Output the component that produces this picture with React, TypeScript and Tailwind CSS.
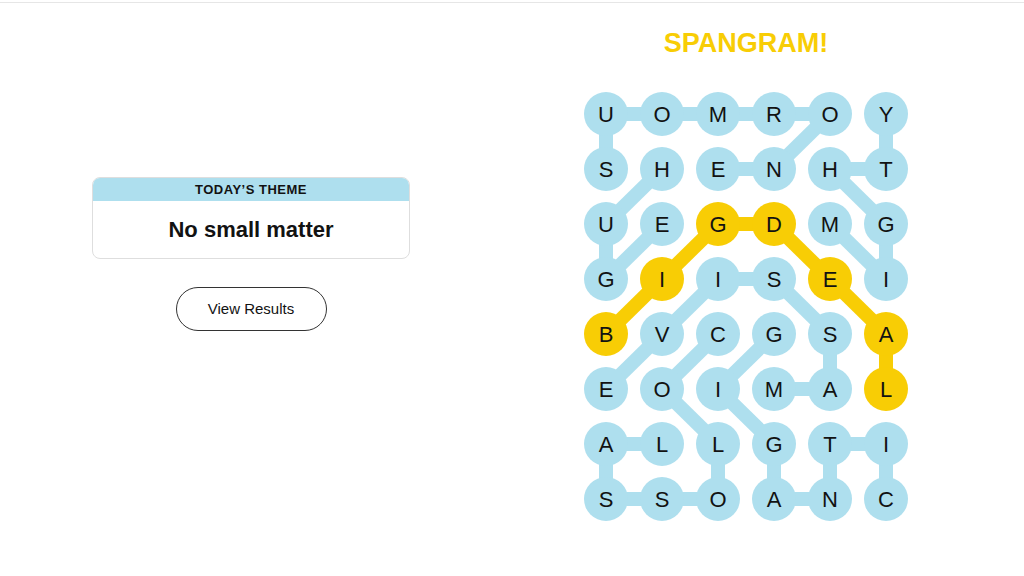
import React from 'react';

const ROWS = ['UOMROY', 'SHENHT', 'UEGDMG', 'GIISEI', 'BVCGSA', 'EOIMAL', 'ALLGTI', 'SSOANC'];

// words as paths of [row, col]
const WORDS: { cells: [number, number][]; spangram?: boolean }[] = [
  { cells: [[1, 2], [1, 3], [0, 4], [0, 3], [0, 2], [0, 1], [0, 0], [1, 0]] },
  { cells: [[1, 1], [2, 0], [3, 0], [2, 1]] },
  { cells: [[2, 4], [3, 5], [2, 5], [1, 4], [1, 5], [0, 5]] },
  { cells: [[5, 3], [5, 4], [4, 4], [3, 3], [3, 2], [4, 1], [5, 0]] },
  { cells: [[4, 2], [5, 1], [6, 2], [7, 2], [7, 1], [7, 0], [6, 0], [6, 1]] },
  { cells: [[4, 3], [5, 2], [6, 3], [7, 3], [7, 4], [6, 4], [6, 5], [7, 5]] },
  { cells: [[4, 0], [3, 1], [2, 2], [2, 3], [3, 4], [4, 5], [5, 5]], spangram: true },
];

const BLUE = '#aedfee';
const YELLOW = '#f8cd05';
const cx = (c: number) => 22 + c * 56;
const cy = (r: number) => 22 + r * 55;

const spangramCells = new Set(
  WORDS.filter((w) => w.spangram).flatMap((w) => w.cells.map(([r, c]) => `${r}-${c}`)),
);

function Board() {
  return (
    <div className="relative w-[324px] h-[429px]">
      <svg className="absolute inset-0" width={324} height={429}>
        {WORDS.map((word, i) =>
          word.cells.slice(1).map(([r, c], j) => {
            const [pr, pc] = word.cells[j];
            return (
              <line
                key={`${i}-${j}`}
                x1={cx(pc)}
                y1={cy(pr)}
                x2={cx(c)}
                y2={cy(r)}
                stroke={word.spangram ? YELLOW : BLUE}
                strokeWidth={14}
              />
            );
          }),
        )}
      </svg>
      <div className="relative grid grid-cols-[repeat(6,44px)] grid-rows-[repeat(8,44px)] gap-x-[12px] gap-y-[11px]">
        {ROWS.flatMap((row, r) =>
          row.split('').map((letter, c) => (
            <div
              key={`${r}-${c}`}
              className={`w-[44px] h-[44px] rounded-full flex items-center justify-center text-[22px] text-[#121212] ${
                spangramCells.has(`${r}-${c}`) ? 'bg-[#f8cd05]' : 'bg-[#aedfee]'
              }`}
            >
              {letter}
            </div>
          )),
        )}
      </div>
    </div>
  );
}

export default function App() {
  return (
    <div className="w-[1024px] h-[576px] bg-white font-['Liberation_Sans',Arial,sans-serif] overflow-hidden">
      <div className="mt-[2px] h-px bg-[#e6e6e6]" />
      <div className="flex">
        <div className="w-[318px] ml-[92px] pt-[174px] flex flex-col items-center">
          <div className="w-full rounded-[8px] border border-[#dedede] overflow-hidden">
            <div className="h-[23px] bg-[#aedfee] flex items-center justify-center text-[13px] font-bold tracking-[0.5px] text-[#121212]">
              TODAY&rsquo;S THEME
            </div>
            <div className="h-[57px] flex items-center justify-center text-[22px] font-bold text-[#121212]">
              No small matter
            </div>
          </div>
          <button className="mt-[28px] w-[151px] h-[44px] rounded-full border border-[#333] text-[15px] text-[#121212]">
            View Results
          </button>
        </div>
        <div className="ml-[174px] w-[324px] flex flex-col items-center">
          <div className="mt-[22px] h-[36px] flex items-center text-[27px] font-bold text-[#f8cd05]">SPANGRAM!</div>
          <div className="mt-[31px]">
            <Board />
          </div>
        </div>
      </div>
    </div>
  );
}
